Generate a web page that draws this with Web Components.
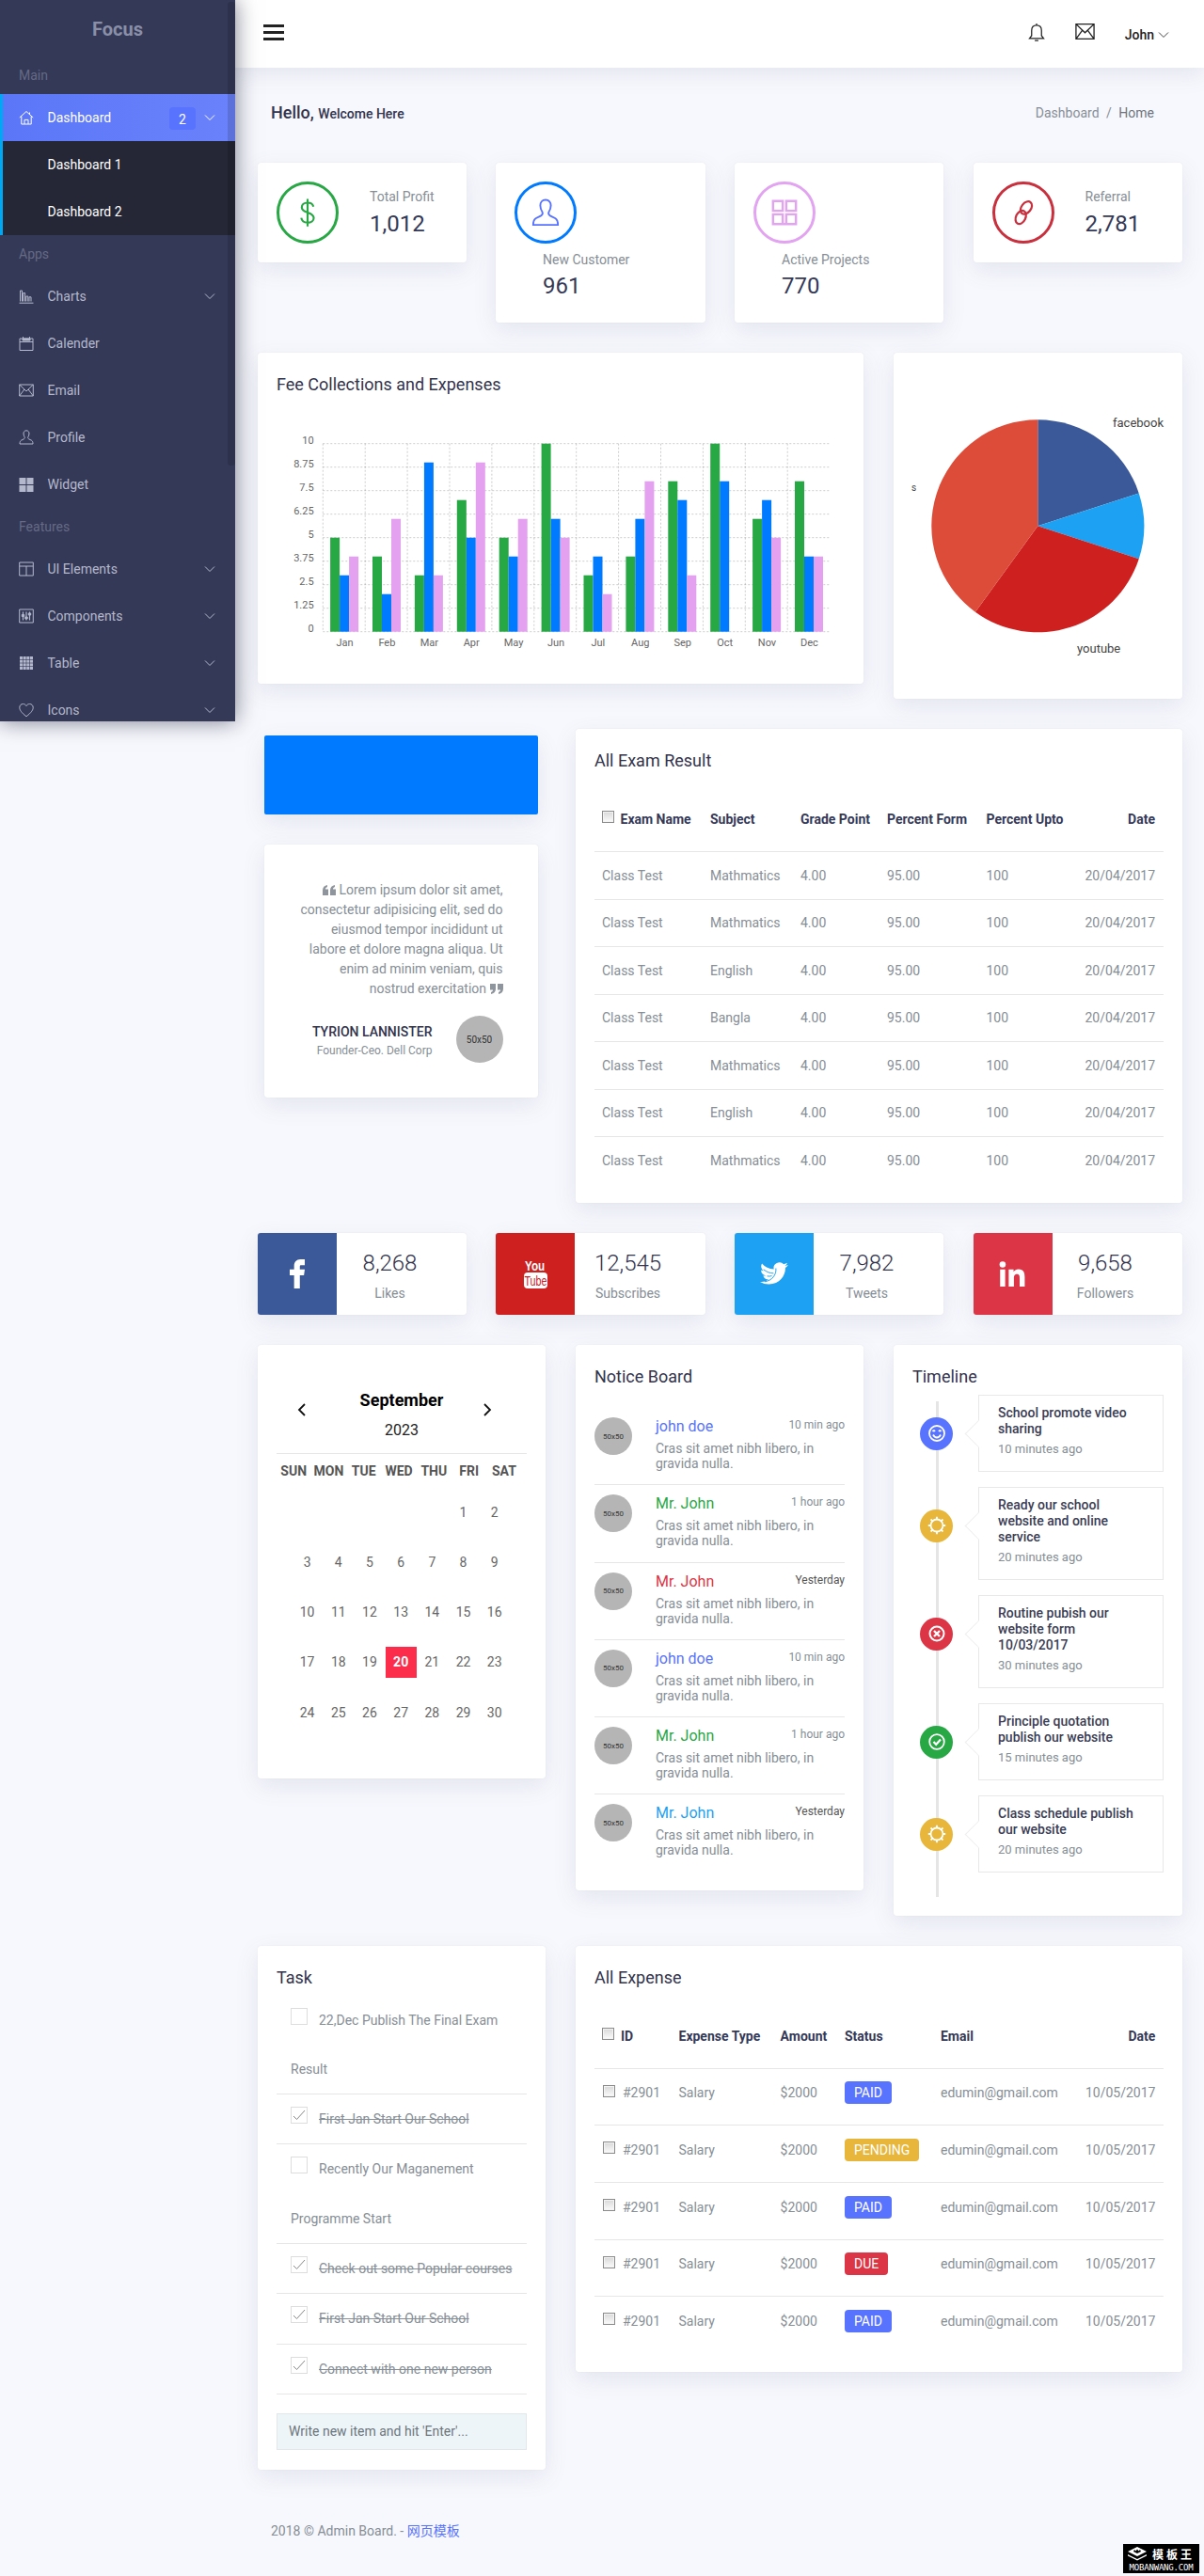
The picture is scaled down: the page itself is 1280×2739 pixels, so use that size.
<!DOCTYPE html>
<html lang="en">
<head>
<meta charset="utf-8">
<title>Focus Admin</title>
<style>
  html, body { margin: 0; padding: 0; }
  body { background: #f7f8fd; font-family: Roboto, "Noto Sans CJK SC", sans-serif; font-size: 14px; color: #868e96; overflow-x: hidden; }
</style>
</head>
<body>
<admin-layout>
  <side-bar slot="side"></side-bar>
  <top-bar slot="top"></top-bar>
  <page-title></page-title>

  <dash-grid cols="221.5px 222.5px 222px 222.5px" gap="31.5" height="170" bottom="32">
    <stat-card icon="dollar" color="#28a745" label="Total Profit" value="1,012"></stat-card>
    <stat-card icon="user" color="#007bff" tone="#5873fe" label="New Customer" value="961" wrapped></stat-card>
    <stat-card icon="gridline" color="#e2a4f0" label="Active Projects" value="770" wrapped></stat-card>
    <stat-card icon="link" color="#c9303e" label="Referral" value="2,781"></stat-card>
  </dash-grid>

  <dash-grid cols="644px 307px" gap="32" height="368" bottom="32">
    <ui-card heading="Fee Collections and Expenses" style="height:352px"><bar-chart></bar-chart></ui-card>
    <ui-card style="height:368px;padding:20px 18px"><pie-chart></pie-chart></ui-card>
  </dash-grid>

  <dash-grid cols="306px 645px" gap="32" height="503.5" bottom="32.5">
    <div style="padding:7px 8px 0 7px">
      <div style="height:84px;background:#007bff;border-radius:2px;box-shadow:0 8px 24px rgba(90,100,140,.12);margin-bottom:32px"></div>
      <quote-card name="Tyrion Lannister" role="Founder-Ceo. Dell Corp"></quote-card>
    </div>
    <exam-table></exam-table>
  </dash-grid>

  <dash-grid cols="221.5px 222.5px 222px 222.5px" gap="31.5" height="87" bottom="32">
    <social-card brand="facebook" color="#3b5998" value="8,268" label="Likes"></social-card>
    <social-card brand="youtube" color="#cd201f" value="12,545" label="Subscribes"></social-card>
    <social-card brand="twitter" color="#1da1f2" value="7,982" label="Tweets"></social-card>
    <social-card brand="linkedin" color="#dc3545" value="9,658" label="Followers"></social-card>
  </dash-grid>

  <dash-grid cols="306px 306px 307px" gap="32" height="607" bottom="31.5">
    <month-calendar></month-calendar>
    <ui-card heading="Notice Board" style="height:580px">
      <notice-item name="john doe" color="#5873fe" time="10 min ago"></notice-item>
      <notice-item name="Mr. John" color="#28a745" time="1 hour ago"></notice-item>
      <notice-item name="Mr. John" color="#dc3545" time="Yesterday" dark></notice-item>
      <notice-item name="john doe" color="#5873fe" time="10 min ago"></notice-item>
      <notice-item name="Mr. John" color="#28a745" time="1 hour ago"></notice-item>
      <notice-item name="Mr. John" color="#1da1f2" time="Yesterday" dark last></notice-item>
    </ui-card>
    <ui-card heading="Timeline" style="height:607px">
      <time-line>
        <time-item kind="smile" color="#5873fe" when="10 minutes ago">School promote video sharing</time-item>
        <time-item kind="sun" color="#e7b63a" when="20 minutes ago">Ready our school website and online service</time-item>
        <time-item kind="cross" color="#dc3545" when="30 minutes ago">Routine pubish our website form 10/03/2017</time-item>
        <time-item kind="check" color="#28a745" when="15 minutes ago">Principle quotation publish our website</time-item>
        <time-item kind="sun" color="#e7b63a" when="20 minutes ago">Class schedule publish our website</time-item>
      </time-line>
    </ui-card>
  </dash-grid>

  <dash-grid cols="306px 645px" gap="32" height="557" bottom="0">
    <ui-card heading="Task" style="height:557px">
      <task-item>22,Dec Publish The Final Exam Result</task-item>
      <task-item done>First Jan Start Our School</task-item>
      <task-item>Recently Our Maganement Programme Start</task-item>
      <task-item done>Check out some Popular courses</task-item>
      <task-item done>First Jan Start Our School</task-item>
      <task-item done>Connect with one new person</task-item>
      <task-input>Write new item and hit 'Enter'...</task-input>
    </ui-card>
    <expense-table></expense-table>
  </dash-grid>

  <page-footer></page-footer>
  <water-mark slot="over"></water-mark>
</admin-layout>

<script>
const SHADOW = 'box-shadow: 0 8px 24px rgba(90,100,140,.12), 0 0 1px rgba(0,0,0,.12);';

const ICONS = {
  home: '<path d="M.8 8 8 1.5 15.2 8M2.8 6.6V15h10.4V6.6M6 15v-4.6h4V15M11.5 2.5V5"/>',
  chart: '<path d="M.5 15.2h15M1.5 13.5V2h2v11.5M4.6 13.5V4.5h2v9M7.8 13.5V8h2v5.5M11 13.5V8.8h2v4.7"/>',
  calendar: '<path d="M1 3h14v12.5H1zM1 6.5h14M4.5 1v3.5M11.5 1v3.5"/><path d="M4 3h8v2H4z" fill="currentColor"/>',
  email: '<path d="M.7 2h14.6v12H.7zM.7 2 8 9l7.3-7M.7 14l5.2-7M15.3 14l-5.2-7"/>',
  user: '<path d="M8 .8C6 .8 5 2.300 5 4c0 1.600.7 3 1.200 3.800.3.800 0 1.500-.8 2l-3 1.500C1.500 11.900 1 13 1 15h14c0-2-.5-3.100-1.400-3.700l-3-1.500c-.8-.5-1.100-1.200-.8-2C10.300 7 11 5.600 11 4c0-1.700-1-3.200-3-3.200z"/>',
  grid: '<path d="M.5 1h7v7h-7zM8.500 1h7v7h-7zM.5 9h7v7h-7zM8.500 9h7v7h-7z" fill="currentColor" stroke="none"/>',
  layout: '<path d="M.7 1h14.600v14H.7zM.7 5h14.600M8 5v10"/>',
  panel: '<path d="M.7 1h14.600v14H.7z"/><path d="M4.500 3.500v9M8 3.500v9M11.500 3.500v9" stroke-width="1.200"/><path d="M3.300 6.500h2.400v2H3.300zM6.800 9h2.400v2H6.800zM10.300 5h2.400v2h-2.400z" fill="currentColor"/>',
  table: '<path d="M1 1h14v14H1z" fill="currentColor" stroke="none"/><path d="M1 4.500h14M1 8h14M1 11.500h14M4.500 1v14M8 1v14M11.500 1v14" stroke="#343957" stroke-width=".6"/>',
  heart: '<path d="M8 14.800C2.500 10.500.8 7.800.8 5.300.8 3 2.500 1.500 4.500 1.500c1.500 0 2.800.8 3.500 2.100.7-1.300 2-2.100 3.500-2.100 2 0 3.700 1.500 3.700 3.800 0 2.500-1.700 5.200-7.200 9.500z"/>',
  bell: '<path d="M8 2.300c-2.800 0-4.200 2-4.200 4.500v4.400L2 13.500h12l-1.800-2.300V6.800c0-2.500-1.400-4.500-4.200-4.500zM8 .8v1.500M6.500 15.200h3"/>',
  chevron: '<path d="M3 5.500 8 10.500 13 5.500"/>',
  dollar: '<path d="M11.300 4.700C11 3.200 9.700 2.400 8 2.400 6 2.400 4.700 3.500 4.700 5c0 3.600 6.800 2.300 6.800 6 0 1.600-1.500 2.700-3.500 2.700-1.900 0-3.300-1-3.600-2.700M8 .2v15.600" stroke-width="1.150"/>',
  gridline: '<path d="M1.500 1.500h5.500v5.500H1.500zM9 1.500h5.500v5.500H9zM1.500 9h5.500v5.500H9H1.500zM9 9h5.500v5.500H9z" stroke-width="1.300"/>',
  link: '<g stroke-width="1.200"><ellipse cx="9.600" cy="5.300" rx="2.700" ry="4" transform="rotate(38 9.600 5.300)"/><ellipse cx="6.500" cy="10.700" rx="2.700" ry="4" transform="rotate(26 6.500 10.700)"/></g>'
};

// base for all elements: shadow root is filled once, when attributes are known
class ShadowEl extends HTMLElement {
  constructor() {
    super();
    this.attachShadow({mode: 'open'});
  }

  connectedCallback() {
    this.shadowRoot.innerHTML = `<style>${this.constructor.css}</style>${this.render()}`;
  }

  attr(name, fallback = '') {
    return this.getAttribute(name) ?? fallback;
  }
}

class UiIcon extends ShadowEl {
  static css = `
    :host { display: inline-block; width: 1em; height: 1em; line-height: 0; }
    svg { width: 100%; height: 100%; fill: none; stroke: currentColor; stroke-width: 1; overflow: visible; }
  `;
  render() {
    return `<svg viewBox="0 0 16 16">${ICONS[this.attr('name')] || ''}</svg>`;
  }
}

class UiCard extends ShadowEl {
  static css = `
    :host { display: block; box-sizing: border-box; padding: 20px; background: #fff; border-radius: 3px; ${SHADOW} }
    h4 { margin: 0; font-size: 18px; font-weight: 400; line-height: 27px; color: #32334d; }
  `;
  render() {
    const heading = this.attr('heading');
    return `${heading ? `<h4>${heading}</h4>` : ''}<slot></slot>`;
  }
}

class AdminLayout extends ShadowEl {
  static css = `
    :host { display: flex; position: relative; min-height: 2739px; align-items: flex-start; }
    .side { flex: 0 0 250px; position: relative; z-index: 2; }
    .main { flex: 1; min-width: 0; }
    .content { padding: 0 23px 0 24px; }
  `;
  render() {
    return `
      <div class="side"><slot name="side"></slot></div>
      <div class="main"><slot name="top"></slot><div class="content"><slot></slot></div></div>
      <slot name="over"></slot>
    `;
  }
}

class SideBar extends ShadowEl {
  static css = `
    :host { display: block; height: 767px; overflow: hidden; position: relative; background: #343957; box-shadow: 0 0 22px rgba(20,24,50,.55); }
    .logo { height: 60px; line-height: 62px; text-align: center; font-size: 20px; font-weight: 700; color: #8a8fa8; }
    .label { height: 40px; line-height: 40px; padding-left: 20px; color: #656a85; font-size: 14px; }
    .item { display: flex; align-items: center; height: 50px; padding: 0 19px 0 20px; color: #b4b8cc; font-size: 14px; }
    .item ui-icon { font-size: 16px; margin-right: 14.500px; }
    .item span { flex: 1; }
    .item ui-icon.arrow { font-size: 16px; margin: 0; }
    .active { background: linear-gradient(90deg, #5b77f8, #6a82fb); color: #fff; border-left: 3px solid #00a8f3; padding-left: 17px; }
    .badge { width: 28px; height: 24px; line-height: 26px; margin: 2px 7px 0 0; text-align: center; border-radius: 4px; background: #5873fe; font-size: 14px; }
    .sub { background: #252736; border-left: 3px solid #00a8f3; }
    .sub div { height: 50px; line-height: 50px; padding-left: 47.500px; color: #fff; }
    .bar { position: absolute; top: 2px; right: 0; width: 8px; height: 493px; background: rgba(0,0,0,.13); border-radius: 3px; }
  `;
  row(icon, text, arrow) {
    return `<div class="item"><ui-icon name="${icon}"></ui-icon><span>${text}</span>${arrow ? '<ui-icon class="arrow" name="chevron"></ui-icon>' : ''}</div>`;
  }
  render() {
    return `
      <div class="logo">Focus</div>
      <div class="label">Main</div>
      <div class="item active"><ui-icon name="home"></ui-icon><span>Dashboard</span><div class="badge">2</div><ui-icon class="arrow" name="chevron"></ui-icon></div>
      <div class="sub"><div>Dashboard 1</div><div>Dashboard 2</div></div>
      <div class="label">Apps</div>
      ${this.row('chart', 'Charts', true)}
      ${this.row('calendar', 'Calender')}
      ${this.row('email', 'Email')}
      ${this.row('user', 'Profile')}
      ${this.row('grid', 'Widget')}
      <div class="label">Features</div>
      ${this.row('layout', 'UI Elements', true)}
      ${this.row('panel', 'Components', true)}
      ${this.row('table', 'Table', true)}
      ${this.row('heart', 'Icons', true)}
      <div class="bar"></div>
    `;
  }
}

class TopBar extends ShadowEl {
  static css = `
    :host { display: flex; align-items: center; height: 72px; padding: 0 35px 0 30px; background: #fff; box-shadow: 0 6px 22px rgba(90,100,140,.13); position: relative; z-index: 1; }
    .burger { display: flex; flex-direction: column; gap: 4px; width: 22px; margin-top: -3px; }
    .burger i { display: block; height: 3px; background: #222; }
    .right { margin-left: auto; display: flex; align-items: center; color: #222; }
    .right > ui-icon { margin-top: -5px; }
    .bell { margin-right: 31px; font-size: 20px; }
    .mail { margin-right: 32px; font-size: 21px; }
    b { font-weight: 500; margin-right: 2px; font-size: 14px; }
    .drop { font-size: 16px; color: #444; }
    .john { display: flex; align-items: center; margin-top: 2px; }
  `;
  render() {
    return `
      <div class="burger"><i></i><i></i><i></i></div>
      <div class="right">
        <ui-icon class="bell" name="bell"></ui-icon>
        <ui-icon class="mail" name="email"></ui-icon>
        <div class="john"><b>John</b><ui-icon class="drop" name="chevron"></ui-icon></div>
      </div>
    `;
  }
}

class PageTitle extends ShadowEl {
  static css = `
    :host { display: flex; align-items: center; justify-content: space-between; height: 95px; margin-bottom: 6px; padding: 0 30px 0 14px; }
    .hello { font-size: 18px; font-weight: 500; color: #32334d; }
    .hello small { font-size: 14px; }
    .crumb { color: #868e96; font-size: 14px; }
    .crumb i { font-style: normal; margin: 0 7.500px; }
    .crumb span { color: #6c757d; }
  `;
  render() {
    return `
      <div class="hello">Hello, <small>Welcome Here</small></div>
      <div class="crumb">Dashboard<i>/</i><span>Home</span></div>
    `;
  }
}

class DashGrid extends ShadowEl {
  static css = `:host { display: grid; align-items: start; }`;
  render() {
    this.style.gridTemplateColumns = this.attr('cols');
    this.style.columnGap = this.attr('gap') + 'px';
    this.style.height = this.attr('height') + 'px';
    this.style.marginBottom = this.attr('bottom') + 'px';
    return '<slot></slot>';
  }
}

class StatCard extends ShadowEl {
  static css = `
    :host { display: flex; box-sizing: border-box; height: 106px; padding: 20px; background: #fff; border-radius: 3px; ${SHADOW} }
    :host([wrapped]) { height: 170px; display: block; }
    .ring { box-sizing: border-box; width: 66px; height: 66px; flex: none; border: 3px solid; border-radius: 50%; display: flex; align-items: center; justify-content: center; font-size: 30px; }
    .text { margin-left: 33px; padding-top: 6px; }
    :host([wrapped]) .text { margin: 7px 0 0 30px; padding: 0; }
    .label { font-size: 14px; line-height: 20px; color: #868e96; }
    .value { font-size: 24px; line-height: 30px; margin-top: 4px; color: #343957; }
    :host([wrapped]) .value { margin-top: 3px; }
  `;
  render() {
    const color = this.attr('color');
    return `
      <div class="ring" style="border-color:${color};color:${this.attr('tone', color)}"><ui-icon name="${this.attr('icon')}"></ui-icon></div>
      <div class="text"><div class="label">${this.attr('label')}</div><div class="value">${this.attr('value')}</div></div>
    `;
  }
}

class BarChart extends ShadowEl {
  static css = `
    :host { display: block; }
    svg { display: block; width: 604px; height: 300px; font-family: Roboto, sans-serif; font-size: 11px; }
    line { stroke: rgba(0,0,0,.2); stroke-dasharray: 2; }
    text { fill: #666; }
  `;
  render() {
    const x0 = 49.3, y0 = 49.7, stepX = 44.9, h = 200;
    const labels = ['10', '8.75', '7.5', '6.25', '5', '3.75', '2.5', '1.25', '0'];
    const months = ['Jan', 'Feb', 'Mar', 'Apr', 'May', 'Jun', 'Jul', 'Aug', 'Sep', 'Oct', 'Nov', 'Dec'];
    const series = [
      ['#28a745', [5, 4, 3, 7, 5, 10, 3, 4, 8, 10, 6, 8]],
      ['#007bff', [3, 2, 9, 5, 4, 6, 4, 6, 7, 8, 7, 4]],
      ['#e4a1ef', [4, 6, 3, 9, 6, 5, 2, 8, 3, 0, 5, 4]]
    ];
    let out = '';
    labels.forEach((t, i) => {
      const y = y0 + i * 25;
      out += `<line x1="${x0}" x2="${x0 + stepX * 12}" y1="${y}" y2="${y}"/>`;
      out += `<text x="39.6" y="${y}" text-anchor="end">${t}</text>`;
    });
    months.forEach((m, i) => {
      const x = x0 + i * stepX;
      out += `<line x1="${x}" x2="${x}" y1="${y0}" y2="${y0 + h}"/>`;
      out += `<text x="${x + 23.2}" y="265" text-anchor="middle">${m}</text>`;
    });
    series.forEach(([color, data], s) => {
      data.forEach((v, i) => {
        if (v) out += `<rect x="${x0 + i * stepX + 7.8 + s * 10}" y="${y0 + h - v * 20}" width="10" height="${v * 20}" fill="${color}"/>`;
      });
    });
    return `<svg viewBox="0 0 604 300">${out}</svg>`;
  }
}

class PieChart extends ShadowEl {
  static css = `
    :host { display: block; }
    svg { display: block; width: 271px; height: 328px; font-family: Roboto, sans-serif; font-size: 13px; }
    text { fill: #444; }
  `;
  render() {
    const cx = 135.3, cy = 164.3, r = 113;
    const parts = [['#3b5998', 0, 72], ['#1da1f2', 72, 108], ['#cd201f', 108, 216], ['#dd4b39', 216, 360]];
    const pt = a => {
      const t = a * Math.PI / 180;
      return `${(cx + r * Math.sin(t)).toFixed(2)} ${(cy - r * Math.cos(t)).toFixed(2)}`;
    };
    const slices = parts.map(([c, a, b]) =>
      `<path fill="${c}" d="M${cx} ${cy}L${pt(a)}A${r} ${r} 0 ${b - a > 180 ? 1 : 0} 1 ${pt(b)}Z"/>`).join('');
    return `<svg viewBox="0 0 271 328">${slices}
      <text x="215" y="59">facebook</text>
      <text x="177" y="299">youtube</text>
      <text x="1" y="127" style="font-size:10px">s</text>
    </svg>`;
  }
}

class QuoteCard extends ShadowEl {
  static css = `
    :host { display: block; box-sizing: border-box; height: 269px; padding: 37.500px 37.500px 0 36px; background: #fff; border-radius: 3px; text-align: right; ${SHADOW} }
    p { margin: 0; font-size: 14px; line-height: 21px; color: #868e96; }
    svg { width: 14px; height: 11px; fill: #8f959c; vertical-align: -1px; }
    .who { display: flex; justify-content: flex-end; align-items: center; margin-top: 18.500px; }
    .name { font-size: 14px; font-weight: 500; line-height: 20px; color: #32334d; text-transform: uppercase; }
    .role { font-size: 12px; line-height: 20px; color: #868e96; }
    ph-avatar { margin-left: 25px; }
    .text { margin-top: 3px; }
  `;
  render() {
    const mark = '<path d="M0 5.500C0 2.500 2 .5 5 0v2C3.700 2.400 3 3.200 3 4.500h3V11H0zM8 5.500C8 2.500 10 .5 13 0v2c-1.300.4-2 1.200-2 2.500h3V11H8z"/>';
    return `
      <p><svg viewBox="0 0 14 11">${mark}</svg> Lorem ipsum dolor sit amet, consectetur adipisicing elit, sed do eiusmod tempor incididunt ut labore et dolore magna aliqua. Ut enim ad minim veniam, quis nostrud exercitation <svg viewBox="0 0 14 11" style="transform:rotate(180deg)">${mark}</svg></p>
      <div class="who">
        <div class="text"><div class="name">${this.attr('name')}</div><div class="role">${this.attr('role')}</div></div>
        <ph-avatar size="50"></ph-avatar>
      </div>
    `;
  }
}

class PhAvatar extends ShadowEl {
  static css = `
    :host { display: flex; flex: none; align-items: center; justify-content: center; border-radius: 50%; background: #b5b5b5; color: #333; }
  `;
  render() {
    const size = Number(this.attr('size', 50));
    this.style.width = this.style.height = size + 'px';
    this.style.fontSize = (size / 5) + 'px';
    return '50x50';
  }
}

class MiniCheck extends ShadowEl {
  static css = `
    :host { display: inline-block; flex: none; box-sizing: border-box; width: 13px; height: 13px; border: 1px solid #8b8b8b; background: linear-gradient(#d8d8d8, #fbfbfb); box-shadow: inset 0 0 0 1px #f4f4f4; }
  `;
  render() { return ''; }
}

class ExamTable extends ShadowEl {
  static css = `
    :host { display: block; box-sizing: border-box; height: 503.500px; padding: 20px; background: #fff; border-radius: 3px; ${SHADOW} }
    h4 { margin: 0 0 15px; font-size: 18px; font-weight: 400; line-height: 27px; color: #32334d; }
    .row { display: grid; grid-template-columns: 115px 96px 92px 105.500px 1fr 80px; align-items: center; padding: 0 9px 0 8px; box-sizing: border-box; height: 50.500px; border-top: 1px solid #e6e6e6; color: #868e96; }
    .head { height: 68px; border: 0; font-weight: 700; color: #343957; }
    .row > :last-child { text-align: right; }
    .head > :first-child { display: flex; align-items: center; gap: 6.500px; }
    mini-check { margin-top: -5px; }
  `;
  render() {
    const rows = ['Mathmatics', 'Mathmatics', 'English', 'Bangla', 'Mathmatics', 'English', 'Mathmatics'];
    return `
      <h4>All Exam Result</h4>
      <div class="row head"><div><mini-check></mini-check>Exam Name</div><div>Subject</div><div>Grade Point</div><div>Percent Form</div><div>Percent Upto</div><div>Date</div></div>
      ${rows.map(s => `<div class="row"><div>Class Test</div><div>${s}</div><div>4.00</div><div>95.00</div><div>100</div><div>20/04/2017</div></div>`).join('')}
    `;
  }
}

class SocialCard extends ShadowEl {
  static css = `
    :host { display: flex; height: 87px; background: #fff; border-radius: 3px; overflow: hidden; ${SHADOW} }
    .box { flex: 0 0 84px; display: flex; align-items: center; justify-content: center; color: #fff; }
    .box svg { fill: #fff; display: block; }
    .text { width: 113px; text-align: center; padding-top: 17px; box-sizing: content-box; }
    .num { font-size: 24px; font-weight: 300; line-height: 30px; color: #32334d; }
    .lab { font-size: 14px; line-height: 20px; margin-top: 7px; color: #868e96; }
    .yt { display: flex; flex-direction: column; align-items: center; font-family: "Liberation Sans", sans-serif; font-weight: 700; line-height: 1; }
    .yt span { font-size: 15px; line-height: 12px; transform: scaleX(.78); }
    .yt b { margin-top: 1px; width: 25px; height: 17px; border-radius: 4px; background: #fff; color: #cd201f; font-size: 15px; font-weight: 400; line-height: 17px; text-align: center; }
    .yt b i { display: block; font-style: normal; transform: scaleX(.72); margin: 0 -6px; }
  `;
  brand(name) {
    switch (name) {
      case 'facebook':
        return '<svg width="16" height="31" viewBox="6 4 11 20" preserveAspectRatio="none"><path d="M14.200 8H17V4h-3.200C10.900 4 9.200 5.900 9.200 8.600V11H6v4h3.200v9h4.200v-9h3l.6-4h-3.600V9c0-.6.2-1 .8-1z"/></svg>';
      case 'youtube':
        return '<div class="yt"><span>You</span><b><i>Tube</i></b></div>';
      case 'twitter':
        return '<svg width="30" height="25" viewBox="0 0 24 21" preserveAspectRatio="none"><path d="M23.950 2.570a10 10 0 0 1-2.820.77 4.960 4.960 0 0 0 2.160-2.720c-.95.55-2 .95-3.130 1.180a4.920 4.920 0 0 0-8.390 4.480C7.690 6.100 4.070 4.130 1.640 1.160a4.930 4.930 0 0 0 1.520 6.570 4.900 4.900 0 0 1-2.230-.62v.06a4.930 4.930 0 0 0 3.950 4.830 5 5 0 0 1-2.210.08 4.940 4.940 0 0 0 4.600 3.420A9.870 9.870 0 0 1 0 17.540a13.940 13.940 0 0 0 7.550 2.210c9.050 0 14-7.500 14-13.980 0-.21 0-.42-.02-.63a9.940 9.940 0 0 0 2.460-2.550z"/><path d="M13.500 5.500c.6 6-3.500 11-9.500 12M3 6.500c2.500 2.300 5.500 3.400 8.500 3.500M6 12.500c1.500.3 3 .2 4-.3" fill="none" stroke="#1da1f2" stroke-width=".8"/></svg>';
      default:
        return '<svg width="29" height="27" viewBox="0 0 24 23"><circle cx="3" cy="3" r="2.800"/><path d="M.7 7.500h4.600V23H.7zM8.500 7.500h4.400v2.100h.1c.6-1.200 2.100-2.400 4.400-2.400 4.700 0 5.600 3.100 5.600 7.100V23h-4.600v-7.300c0-1.700 0-4-2.400-4s-2.800 1.900-2.800 3.900V23H8.500z"/></svg>';
    }
  }
  render() {
    return `
      <div class="box" style="background:${this.attr('color')}">${this.brand(this.attr('brand'))}</div>
      <div class="text"><div class="num">${this.attr('value')}</div><div class="lab">${this.attr('label')}</div></div>
    `;
  }
}

class MonthCalendar extends ShadowEl {
  static css = `
    :host { display: block; box-sizing: border-box; height: 461px; padding: 20px; background: #fff; border-radius: 3px; ${SHADOW} }
    .head { display: grid; grid-template-columns: 53px 1fr 53px; height: 95px; border-bottom: 1px solid #e6e6e6; box-sizing: content-box; color: #000; text-align: center; }
    .title { padding-top: 26.500px; }
    .month { font-size: 18px; font-weight: 700; line-height: 24px; }
    .year { font-size: 16px; line-height: 24px; margin-top: 8.500px; color: #222; }
    svg { width: 10px; height: 16px; fill: none; stroke: #111; stroke-width: 1.800; margin-top: 41px; }
    .next { margin-left: -32px; }
    .days { display: grid; grid-template-columns: repeat(7, 37.300px); height: 35.400px; align-items: center; font-weight: 700; color: #555; text-align: center; margin-left: -.5px; }
    .dates { display: grid; grid-template-columns: repeat(7, 33.200px); grid-auto-rows: 53.250px; padding-left: 16px; align-items: center; justify-items: center; color: #666; }
    .dates span { display: block; width: 33px; height: 33px; line-height: 33px; text-align: center; }
    .dates .now { background: #fc2c4b; color: #fff; font-weight: 700; }
  `;
  render() {
    let cells = '<span></span>'.repeat(5);
    for (let d = 1; d <= 30; d++) {
      cells += `<span${d === 20 ? ' class="now"' : ''}>${d}</span>`;
    }
    return `
      <div class="head">
        <div><svg viewBox="0 0 10 16"><path d="M8 2 2 8l6 6"/></svg></div>
        <div class="title"><div class="month">September</div><div class="year">2023</div></div>
        <div class="next"><svg viewBox="0 0 10 16"><path d="m2 2 6 6-6 6"/></svg></div>
      </div>
      <div class="days">${['SUN', 'MON', 'TUE', 'WED', 'THU', 'FRI', 'SAT'].map(d => `<div>${d}</div>`).join('')}</div>
      <div class="dates">${cells}</div>
    `;
  }
}

class NoticeItem extends ShadowEl {
  static css = `
    :host { display: flex; box-sizing: border-box; height: 82.300px; padding-top: 10px; border-bottom: 1px solid #e6e6e6; }
    :host(:first-of-type) { margin-top: 20px; }
    :host([last]) { border: 0; }
    .body { flex: 1; margin-left: 25px; }
    .top { display: flex; justify-content: space-between; align-items: flex-start; }
    .name { font-size: 16px; line-height: 20px; }
    .time { font-size: 12px; line-height: 16px; color: #868e96; }
    :host([dark]) .time { color: #555; }
    p { margin: 5px 0 0; font-size: 14px; line-height: 16px; color: #868e96; }
  `;
  render() {
    return `
      <ph-avatar size="40"></ph-avatar>
      <div class="body">
        <div class="top"><div class="name" style="color:${this.attr('color')}">${this.attr('name')}</div><div class="time">${this.attr('time')}</div></div>
        <p>Cras sit amet nibh libero, in gravida nulla.</p>
      </div>
    `;
  }
}

class TimeLine extends ShadowEl {
  static css = `
    :host { display: flex; flex-direction: column; gap: 16px; position: relative; margin-top: 5.500px; }
    .rail { position: absolute; left: 25px; top: 7px; height: 527px; width: 3px; background: #e5e5e5; }
  `;
  render() {
    return '<div class="rail"></div><slot></slot>';
  }
}

class TimeItem extends ShadowEl {
  static css = `
    :host { display: flex; position: relative; }
    .dot { flex: none; width: 35px; height: 35px; margin: 24px 27px 0 8px; border-radius: 50%; display: flex; align-items: center; justify-content: center; }
    svg { width: 20px; height: 20px; fill: none; stroke: #fff; stroke-width: 1.800; }
    .box { position: relative; flex: 1; box-sizing: border-box; padding: 10px 16px 15px 20px; border: 1px solid #e8e8e8; background: #fff; }
    .box::before { content: ""; position: absolute; left: -11px; top: 30.500px; width: 20px; height: 20px; background: #fff; border-left: 1px solid #eee; border-bottom: 1px solid #eee; transform: rotate(45deg); }
    .t { position: relative; font-size: 14px; font-weight: 500; line-height: 17px; color: #3a3d55; }
    .w { position: relative; margin-top: 5px; font-size: 13px; line-height: 16px; color: #868e96; }
  `;
  glyph(kind) {
    switch (kind) {
      case 'smile':
        return '<circle cx="10" cy="10" r="8"/><path d="M6 11.500c1 2 2.500 3 4 3s3-1 4-3" /><path d="M5.500 8c.8-1 1.800-1 2.500 0M12 8c.7-1 1.700-1 2.500 0"/>';
      case 'sun':
        return '<circle cx="10" cy="10" r="6.500"/><path d="M10 .8v2.700M10 16.500v2.700M.8 10h2.700M16.500 10h2.700M3.500 3.500l2 2M14.500 14.500l2 2M16.500 3.500l-2 2M5.500 14.500l-2 2"/>';
      case 'cross':
        return '<circle cx="10" cy="10" r="7.500" stroke-width="2"/><path d="m7 7 6 6m0-6-6 6" stroke-width="2.400"/>';
      default:
        return '<circle cx="10" cy="10" r="7.800"/><path d="m6.500 10 2.700 2.800 4.800-5.300" stroke-width="2.200"/>';
    }
  }
  render() {
    return `
      <div class="dot" style="background:${this.attr('color')}"><svg viewBox="0 0 20 20">${this.glyph(this.attr('kind'))}</svg></div>
      <div class="box"><div class="t"><slot></slot></div><div class="w">${this.attr('when')}</div></div>
    `;
  }
}

class TaskItem extends ShadowEl {
  static css = `
    :host { display: block; padding-left: 15px; line-height: 52.300px; border-bottom: 1px solid #e6e6e6; color: #868e96; font-size: 14px; }
    :host(:first-of-type) { margin-top: 6px; }
    :host([done]) .txt { text-decoration: line-through; }
    .box { display: inline-block; box-sizing: border-box; width: 18px; height: 18px; margin-right: 12px; border: 1px solid #ddd; vertical-align: -2px; position: relative; top: -2px; }
    svg { display: block; width: 16px; height: 16px; fill: none; stroke: #888; stroke-width: 1; }
  `;
  render() {
    const tick = this.hasAttribute('done') ? '<svg viewBox="0 0 16 16"><path d="m2 9 3.500 3.500L14 3"/></svg>' : '';
    return `<span class="box">${tick}</span><span class="txt"><slot></slot></span>`;
  }
}

class TaskInput extends ShadowEl {
  static css = `
    :host { display: block; box-sizing: border-box; height: 39px; line-height: 37px; margin-top: 20px; padding-left: 12px; background: #eef5f8; border: 1px solid #e2e7e9; color: #6c757d; font-size: 14px; }
  `;
  render() { return '<slot></slot>'; }
}

class StatusBadge extends ShadowEl {
  static css = `
    :host { display: inline-block; height: 24px; line-height: 24px; padding: 0 10px; border-radius: 4px; color: #fff; font-size: 14px; }
    :host([kind="paid"]) { background: #5873fe; }
    :host([kind="pending"]) { background: #e7b63a; }
    :host([kind="due"]) { background: #dc3545; }
  `;
  render() { return '<slot></slot>'; }
}

class ExpenseTable extends ShadowEl {
  static css = `
    :host { display: block; box-sizing: border-box; height: 453px; padding: 20px; background: #fff; border-radius: 3px; ${SHADOW} }
    h4 { margin: 0 0 15px; font-size: 18px; font-weight: 400; line-height: 27px; color: #32334d; }
    .row { display: grid; grid-template-columns: 81.500px 108.100px 68.400px 102px 150px 1fr; padding: 13.700px 8.600px 0 8px; box-sizing: border-box; height: 60.700px; border-top: 1px solid #e6e6e6; color: #868e96; line-height: 24px; }
    .head { height: 68px; padding-top: 0; border: 0; align-items: center; font-weight: 700; color: #343957; }
    .row > :last-child { text-align: right; }
    .id { display: flex; align-items: center; gap: 8px; padding-left: 1px; height: 24px; }
    .head .id { gap: 7px; padding: 0; }
    .id mini-check { margin-top: -4px; }
  `;
  render() {
    const rows = [['paid', 'PAID'], ['pending', 'PENDING'], ['paid', 'PAID'], ['due', 'DUE'], ['paid', 'PAID']];
    return `
      <h4>All Expense</h4>
      <div class="row head"><div class="id"><mini-check></mini-check>ID</div><div>Expense Type</div><div>Amount</div><div>Status</div><div>Email</div><div>Date</div></div>
      ${rows.map(([k, t]) => `<div class="row"><div class="id"><mini-check></mini-check>#2901</div><div>Salary</div><div>$2000</div><div><status-badge kind="${k}">${t}</status-badge></div><div>edumin@gmail.com</div><div>10/05/2017</div></div>`).join('')}
    `;
  }
}

class PageFooter extends ShadowEl {
  static css = `
    :host { display: block; height: 113px; padding: 54px 0 0 14px; box-sizing: border-box; line-height: 20px; color: #868e96; font-size: 14px; }
    a { color: #5873fe; text-decoration: none; font-family: "Noto Sans CJK SC", sans-serif; }
  `;
  render() {
    return '2018 © Admin Board. - <a href="#">网页模板</a>';
  }
}

class WaterMark extends ShadowEl {
  static css = `
    :host { position: absolute; right: 5px; bottom: 3px; width: 81px; height: 31px; background: #000; color: #fff; display: block; overflow: hidden; }
    .top { display: flex; align-items: center; height: 18px; padding: 1px 0 0 4px; }
    svg { width: 22px; height: 17px; fill: #fff; flex: none; }
    .cn { margin-left: 5px; font-family: "Noto Sans CJK SC", sans-serif; font-size: 12px; font-weight: 700; letter-spacing: 3px; line-height: 17px; white-space: nowrap; }
    .en { font-family: "DejaVu Sans Mono", monospace; font-size: 9px; line-height: 12px; text-align: center; white-space: nowrap; letter-spacing: -.2px; }
  `;
  render() {
    return `
      <div class="top">
        <svg viewBox="0 0 22 17"><path d="M11 1 21 6l-10 5L1 6zM1 9l10 5 10-5v1.500l-10 5-10-5z"/><path d="M7 6l1-2 1.500 1.500L11 3.500l1.500 2L14 4l1 2-4 2z" fill="#000"/></svg>
        <div class="cn">模板王</div>
      </div>
      <div class="en">MOBANWANG.COM</div>
    `;
  }
}

customElements.define('ui-icon', UiIcon);
customElements.define('ui-card', UiCard);
customElements.define('admin-layout', AdminLayout);
customElements.define('side-bar', SideBar);
customElements.define('top-bar', TopBar);
customElements.define('page-title', PageTitle);
customElements.define('dash-grid', DashGrid);
customElements.define('stat-card', StatCard);
customElements.define('bar-chart', BarChart);
customElements.define('pie-chart', PieChart);
customElements.define('quote-card', QuoteCard);
customElements.define('ph-avatar', PhAvatar);
customElements.define('mini-check', MiniCheck);
customElements.define('exam-table', ExamTable);
customElements.define('social-card', SocialCard);
customElements.define('month-calendar', MonthCalendar);
customElements.define('notice-item', NoticeItem);
customElements.define('time-line', TimeLine);
customElements.define('time-item', TimeItem);
customElements.define('task-item', TaskItem);
customElements.define('task-input', TaskInput);
customElements.define('status-badge', StatusBadge);
customElements.define('expense-table', ExpenseTable);
customElements.define('page-footer', PageFooter);
customElements.define('water-mark', WaterMark);
</script>
</body>
</html>
